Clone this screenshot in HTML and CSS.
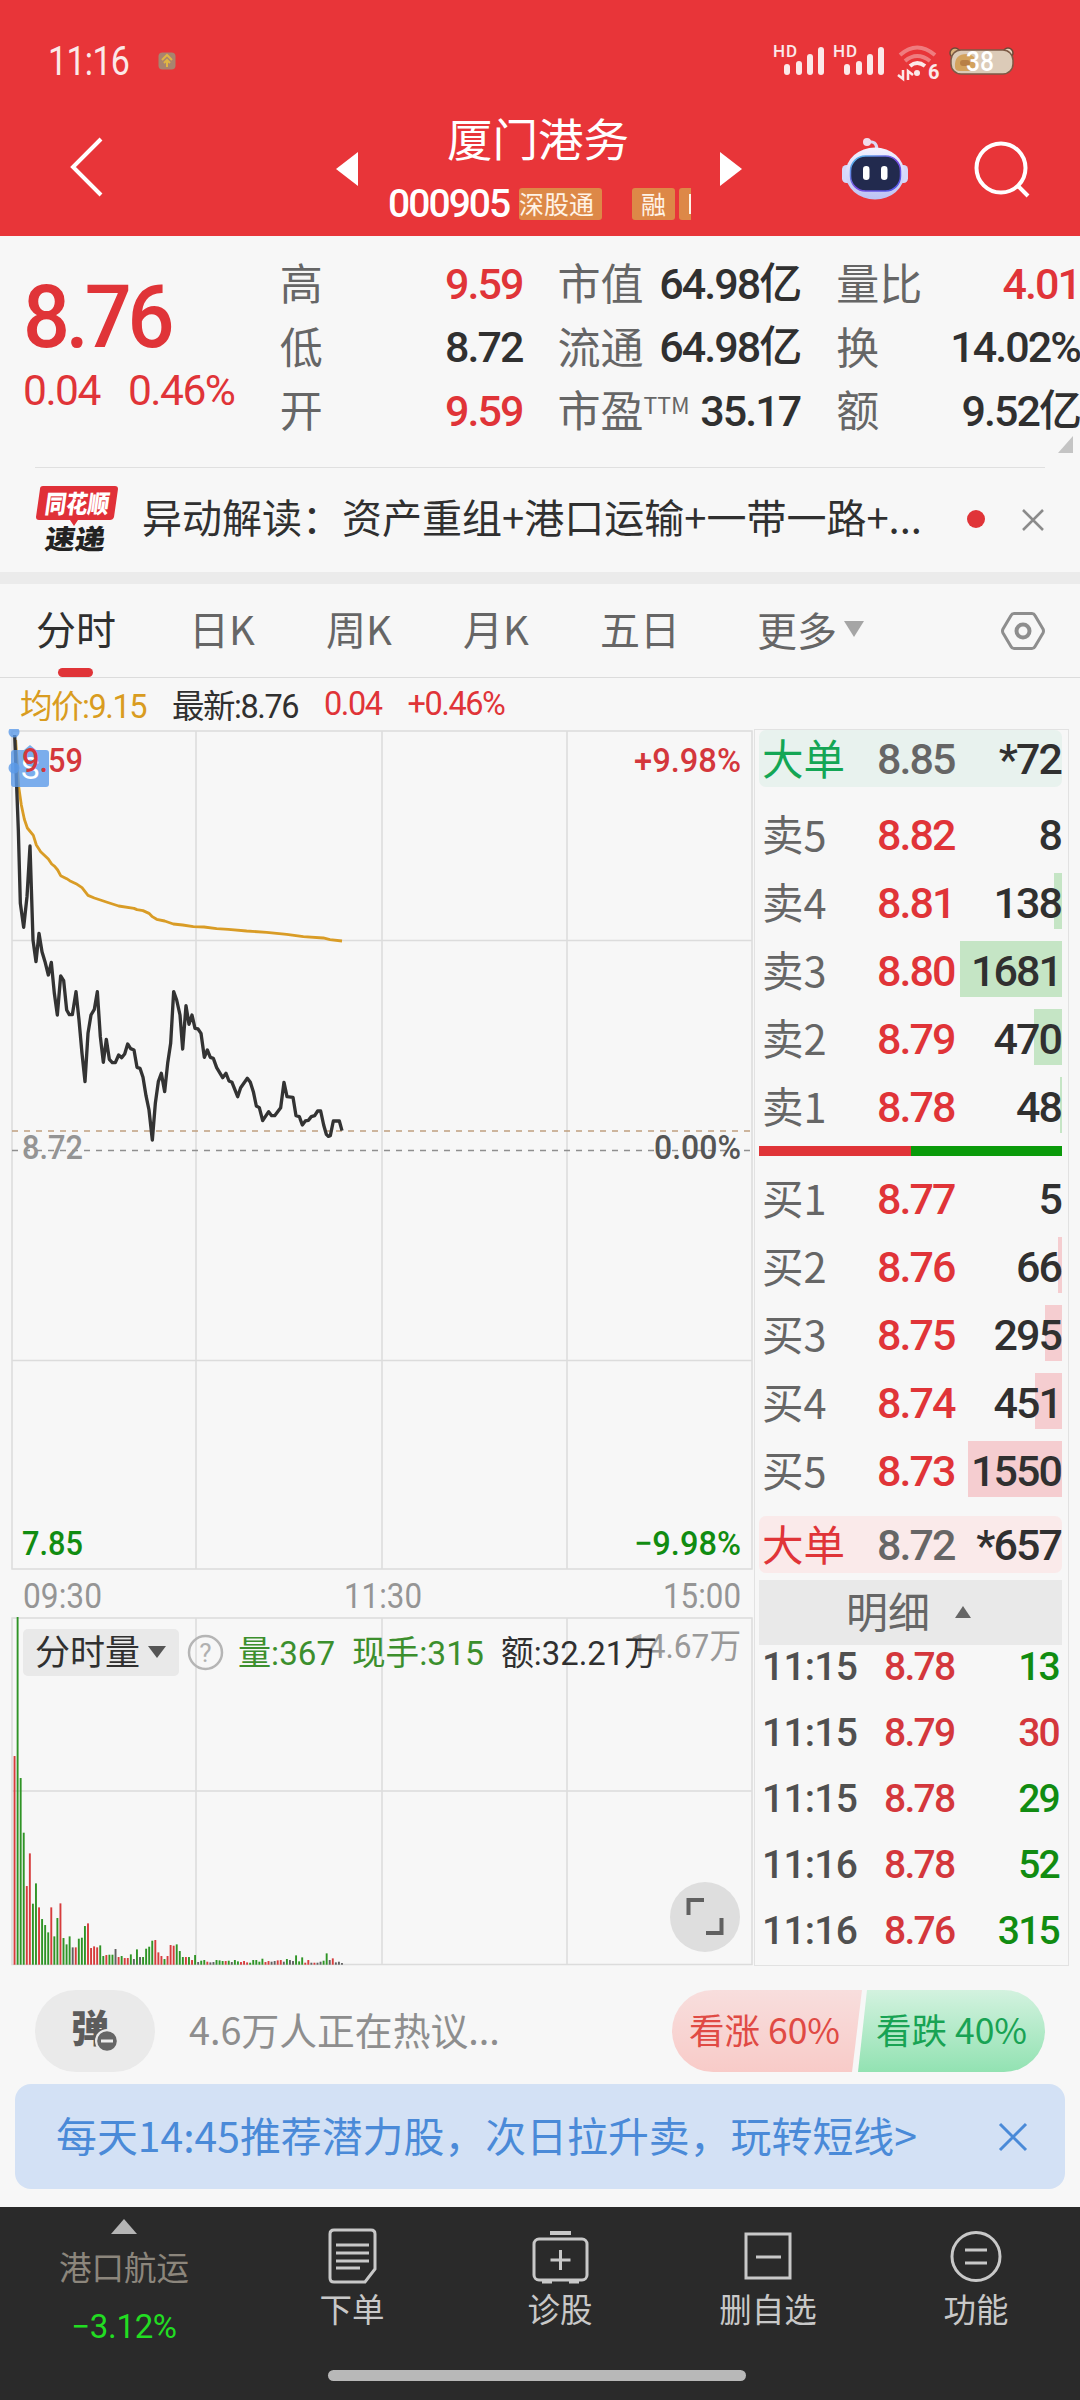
FILE: index.html
```html
<!DOCTYPE html>
<html lang="zh-CN">
<head>
<meta charset="utf-8">
<title>厦门港务 000905</title>
<link rel="stylesheet" href="styles.css">
</head>
<body>
<div class="app">
  <header class="header">
    <div class="status">
      <span class="status-time num">11:16</span>
      <svg class="status-dot" width="18" height="18" viewBox="0 0 18 18"><rect x=".5" y=".5" width="17" height="17" rx="4" fill="#a8846f"/><path d="M9 15V8M4 8l5-5 5 5M6 11l3-3 3 3" fill="none" stroke="#e0b544" stroke-width="2"/></svg>
      <svg class="status-icons" width="246" height="42" viewBox="0 0 246 42">
        <g fill="#fbe9e9">
          <text x="0" y="17" class="hd" textLength="24">HD</text>
          <rect x="11" y="24" width="6" height="11" rx="3"/><rect x="23" y="21" width="6" height="14" rx="3"/><rect x="34" y="14" width="6" height="21" rx="3"/><rect x="45" y="7" width="6" height="28" rx="3"/>
          <text x="60" y="17" class="hd" textLength="24">HD</text>
          <rect x="71" y="24" width="6" height="11" rx="3"/><rect x="83" y="21" width="6" height="14" rx="3"/><rect x="94" y="14" width="6" height="21" rx="3"/><rect x="105" y="7" width="6" height="28" rx="3"/>
          <circle cx="144" cy="33" r="3"/>
          <text x="155" y="39" class="hd six">6</text>
        </g>
        <g fill="none" stroke="#fbe9e9" stroke-width="4">
          <path d="M127 15q17-15 35 0M132 21q12-10 25 0" opacity=".4"/>
          <path d="M137 26q7-6 15 0"/>
          <path d="M130 30v9l-5-4M135 40v-9l5 4" stroke-width="2.5"/>
        </g>
        <g>
          <circle cx="182" cy="13" r="5" fill="#d8b27c" stroke="#6c4a38" stroke-width="1.5"/><circle cx="235" cy="13" r="5" fill="#e8d4c0" stroke="#6c4a38" stroke-width="1.5"/>
          <rect x="178" y="10" width="62" height="24" rx="10" fill="#dccbb8" stroke="#7b5a45" stroke-width="1.5"/>
          <path d="M182 27q-1-13 12-13 9 1 9 9 0 8-8 8h-8q-5 0-5-4z" fill="#d3a25d"/>
          <rect x="187" y="20" width="10" height="6" rx="3" fill="#b88046"/>
          <text x="193" y="31" class="batt" textLength="28" lengthAdjust="spacingAndGlyphs">38</text>
        </g>
      </svg>
    </div>
    <nav class="nav">
      <svg class="back" width="36" height="62" viewBox="0 0 36 62"><path d="M32 3L4 31l28 28" fill="none" stroke="#fff" stroke-width="4"/></svg>
      <svg class="prev" width="22" height="34" viewBox="0 0 22 34"><path d="M22 0v34L0 17z" fill="#fff"/></svg>
      <div class="stock">
        <h1 class="stock-name">厦门港务</h1>
        <div class="stock-code"><span class="num code">000905</span><span class="tag">深股通</span><span class="tag tag-gap">融</span><span class="tag tag-cut"></span></div>
      </div>
      <svg class="next" width="22" height="34" viewBox="0 0 22 34"><path d="M0 0v34l22-17z" fill="#fff"/></svg>
      <svg class="robot" width="68" height="64" viewBox="0 0 68 64">
        <defs>
          <linearGradient id="shell" x1="0" y1="0" x2="0" y2="1"><stop offset="0" stop-color="#f4f2ff"/><stop offset="1" stop-color="#bcc2f4"/></linearGradient>
          <linearGradient id="rim" x1="0" y1="0" x2="1" y2="1"><stop offset="0" stop-color="#4fc8ee"/><stop offset=".5" stop-color="#7a4ae0"/><stop offset="1" stop-color="#4a5be8"/></linearGradient>
        </defs>
        <path d="M26 6q10-2 10 8" fill="none" stroke="#dcd8f4" stroke-width="3"/><circle cx="26" cy="6" r="4" fill="#f2dcec"/>
        <rect x="1" y="29" width="10" height="18" rx="4.500" fill="#d5d8fa"/><rect x="57" y="29" width="10" height="18" rx="4.500" fill="#d5d8fa"/>
        <ellipse cx="34" cy="37.500" rx="29.500" ry="26" fill="url(#shell)"/>
        <rect x="9.500" y="20" width="50" height="35" rx="15" fill="#222a4e" stroke="url(#rim)" stroke-width="1.500"/>
        <rect x="22" y="30" width="6.500" height="14" rx="3.200" fill="#fff"/><rect x="40" y="30" width="6.500" height="14" rx="3.200" fill="#fff"/>
      </svg>
      <svg class="search" width="58" height="58" viewBox="0 0 58 58"><g fill="none" stroke="#fff" stroke-width="4"><circle cx="28" cy="28" r="24.500"/><path d="M44 45l11 11"/></g></svg>
    </nav>
  </header>

  <section class="quote">
    <div class="price">
      <div class="price-now num">8.76</div>
      <div class="price-diff num"><span>0.04</span><span>0.46%</span></div>
    </div>
    <dl class="stats stats-a">
      <div><dt>高</dt><dd class="num red">9.59</dd></div>
      <div><dt>低</dt><dd class="num">8.72</dd></div>
      <div><dt>开</dt><dd class="num red">9.59</dd></div>
    </dl>
    <dl class="stats stats-b">
      <div><dt>市值</dt><dd class="num">64.98亿</dd></div>
      <div><dt>流通</dt><dd class="num">64.98亿</dd></div>
      <div><dt>市盈<sup>TTM</sup></dt><dd class="num">35.17</dd></div>
    </dl>
    <dl class="stats stats-c">
      <div><dt>量比</dt><dd class="num red">4.01</dd></div>
      <div><dt>换</dt><dd class="num">14.02%</dd></div>
      <div><dt>额</dt><dd class="num">9.52亿</dd></div>
    </dl>
    <svg class="corner" width="15" height="17" viewBox="0 0 15 17"><path d="M15 0v17H0z" fill="#c4c4c4"/></svg>
  </section>

  <section class="news">
    <svg class="news-logo" width="84" height="68" viewBox="0 0 84 68">
      <path d="M8 1h72q3 0 3 3l-4 28q-1 3-4 3H43l-4 6-4-6H4q-3 0-3-3L5 4q0-3 3-3z" fill="#e03038"/>
      <text class="logo-a" transform="translate(9 28) skewX(-8)" textLength="64" lengthAdjust="spacingAndGlyphs">同花顺</text>
      <text class="logo-b" transform="translate(9 64) skewX(-8)" textLength="60" lengthAdjust="spacingAndGlyphs">速递</text>
    </svg>
    <span class="news-text">异动解读：资产重组+港口运输+一带一路+...</span>
    <i class="news-dot"></i>
    <svg class="news-close" width="24" height="24" viewBox="0 0 24 24"><path d="M2 2l20 20M22 2L2 22" stroke="#8b8b8b" stroke-width="2.500"/></svg>
  </section>

  <nav class="tabs">
    <span class="tab active">分时</span><span class="tab">日K</span><span class="tab">周K</span><span class="tab">月K</span><span class="tab">五日</span>
    <span class="tab more">更多<svg width="20" height="16" viewBox="0 0 20 16"><path d="M0 0h20L10 16z" fill="#a5a5a5"/></svg></span>
    <svg class="settings" width="46" height="40" viewBox="0 0 46 40"><g fill="none" stroke="#8e8e8e" stroke-width="3"><path d="M14 2.500h18q2 0 3 2l8 13.500q1 2 0 4l-8 13.500q-1 2-3 2H14q-2 0-3-2L3 22q-1-2 0-4l8-13.500q1-2 3-2z"/><circle cx="23" cy="20" r="6.500" stroke-width="4"/></g></svg>
  </nav>

  <main class="board">
    <div class="charts">
      <div class="legend num"><span class="gold">均价:9.15</span><span>最新:8.76</span><span class="red">0.04</span><span class="red">+0.46%</span></div>
      <svg class="chart" width="754" height="1239" viewBox="0 729 754 1239">
        <g fill="none" stroke="#dcdcdc" stroke-width="1.500">
          <path d="M12 731H752V1569H12zM196 731v838M382 731v838M567 731v838M12 940.500h740M12 1360.500h740"/>
          <path d="M12 1618H752V1964.500H12zM196 1618v346M382 1618v346M567 1618v346M12 1791h740"/>
        </g>
        <path d="M12 1131H752" stroke="#c0a080" stroke-width="1.700" stroke-dasharray="6 6"/>
        <path d="M12 1150.500H752" stroke="#8f8f8f" stroke-width="1.700" stroke-dasharray="6 6"/>
        <g transform="translate(0 720) scale(.33333)" fill="none" stroke-linejoin="round" stroke-width="10">
          <path stroke="#d99c26" stroke-width="8.500" d="M47 60L56 200 64 255 73 298 82 324 100 346 109 375 122 395 145 417 155 432 164 439 173 450 182 467 200 476 209 482 228 491 246 503 264 526 283 534 319 546 356 558 402 565 411 569 429 572 447 580 457 590 470 598 494 603 520 612 548 615 580 620 612 621 650 626 685 628 740 633 800 637 860 643 910 650 970 654 990 659 1026 663"/>
          <path stroke="#333" d="M44 45L50 200 55 330 61 550 71 622 81 530 90 378 99 660 108 725 117 640 126 695 135 725 145 765 154 727 163 820 172 885 182 768 191 782 200 870 208 884 217 884 228 815 237 900 246 1000 255 1085 264 940 273 885 283 868 292 815 301 950 310 1027 319 958 328 1018 337 1028 346 1028 356 1005 365 1013 374 1002 383 972 392 986 402 990 411 1042 420 1045 429 1072 438 1127 447 1170 457 1260 466 1150 475 1085 484 1060 494 1115 503 1030 512 970 521 815 530 840 540 885 548 987 558 857 567 913 576 885 585 925 594 927 603 940 613 1012 622 990 631 1012 640 1015 650 1043 668 1073 678 1060 687 1083 696 1087 713 1130 722 1103 742 1075 751 1087 760 1115 769 1158 778 1163 788 1202 806 1175 815 1187 824 1187 842 1163 852 1087 861 1130 879 1132 888 1187 898 1190 907 1215 916 1203 925 1201 934 1190 944 1187 953 1173 962 1173 971 1215 979 1243 985 1249 991 1247 1000 1203 1018 1203 1026 1232"/>
        </g>
        <g fill="#5b9ae8" fill-opacity=".8">
          <path d="M14 750h10l6-5 6 5h10q3 0 3 3v31q0 3-3 3H14q-3 0-3-3v-31q0-3 3-3z"/>
          <circle cx="14" cy="732" r="5.500"/><circle cx="14" cy="768" r="5.500"/>
        </g>
        <text x="21" y="779" class="flag">S</text>
        <g class="axis">
          <text x="22" y="772" fill="#d4373c" textLength="61" lengthAdjust="spacingAndGlyphs">9.59</text>
          <text x="634" y="772" fill="#d4373c" textLength="107" lengthAdjust="spacingAndGlyphs">+9.98%</text>
          <text x="22" y="1159" fill="#949494" textLength="61" lengthAdjust="spacingAndGlyphs">8.72</text>
          <text x="654" y="1159" fill="#555" textLength="87" lengthAdjust="spacingAndGlyphs">0.00%</text>
          <text x="22" y="1555" fill="#118c11" textLength="61" lengthAdjust="spacingAndGlyphs">7.85</text>
          <text x="634" y="1555" fill="#118c11" textLength="107" lengthAdjust="spacingAndGlyphs">−9.98%</text>
          <g fill="#959595" class="time">
            <text x="23" y="1608" textLength="79" lengthAdjust="spacingAndGlyphs">09:30</text>
            <text x="344" y="1608" textLength="78" lengthAdjust="spacingAndGlyphs">11:30</text>
            <text x="663" y="1608" textLength="78" lengthAdjust="spacingAndGlyphs">15:00</text>
          </g>
        </g>
        <g id="volume"></g>
        <rect x="23" y="1629" width="156" height="47" rx="5" fill="#e7e7e7" fill-opacity=".9"/>
        <text x="35" y="1665" class="sel" textLength="105">分时量</text>
        <path d="M148 1646h18l-9 12z" fill="#555"/>
        <circle cx="205.500" cy="1652.500" r="16.500" fill="none" stroke="#b5b5b5" stroke-width="2.500"/>
        <text x="205.500" y="1662" text-anchor="middle" class="help">?</text>
        <g class="vol">
          <text x="630" y="1658" fill="#999" textLength="111" lengthAdjust="spacingAndGlyphs">14.67万</text>
          <text x="238" y="1665" fill="#3c8f2d" textLength="97" lengthAdjust="spacingAndGlyphs">量:367</text>
          <text x="352" y="1665" fill="#3c8f2d" textLength="132" lengthAdjust="spacingAndGlyphs">现手:315</text>
          <text x="501" y="1665" fill="#303030" textLength="156" lengthAdjust="spacingAndGlyphs">额:32.21万</text>
        </g>
        <circle cx="705" cy="1917" r="35" fill="#dedede"/>
        <path d="M688.500 1915v-15H704M721.500 1918v15H706" fill="none" stroke="#606060" stroke-width="4"/>
      </svg>
    </div>

    <aside class="book">
      <div class="big sell"><b>大单</b><span class="num">8.85</span><em class="num">*72</em></div>
      <div class="levels asks">
        <div class="level"><b>卖5</b><span class="num">8.82</span><em class="num">8</em></div>
        <div class="level"><b>卖4</b><span class="num">8.81</span><em class="num">138</em><i style="width:8px"></i></div>
        <div class="level"><b>卖3</b><span class="num">8.80</span><em class="num">1681</em><i style="width:102px"></i></div>
        <div class="level"><b>卖2</b><span class="num">8.79</span><em class="num">470</em><i style="width:28px"></i></div>
        <div class="level"><b>卖1</b><span class="num">8.78</span><em class="num">48</em><i style="width:2px"></i></div>
      </div>
      <div class="ratio"><i></i></div>
      <div class="levels bids">
        <div class="level"><b>买1</b><span class="num">8.77</span><em class="num">5</em></div>
        <div class="level"><b>买2</b><span class="num">8.76</span><em class="num">66</em><i style="width:4px"></i></div>
        <div class="level"><b>买3</b><span class="num">8.75</span><em class="num">295</em><i style="width:17px"></i></div>
        <div class="level"><b>买4</b><span class="num">8.74</span><em class="num">451</em><i style="width:27px"></i></div>
        <div class="level"><b>买5</b><span class="num">8.73</span><em class="num">1550</em><i style="width:94px"></i></div>
      </div>
      <div class="big buy"><b>大单</b><span class="num">8.72</span><em class="num">*657</em></div>
      <div class="detail"><span>明细</span><svg width="16" height="12" viewBox="0 0 16 12"><path d="M8 0l8 12H0z" fill="#666"/></svg></div>
      <div class="ticks num">
        <div><b>11:15</b><span>8.78</span><em>13</em></div>
        <div><b>11:15</b><span>8.79</span><em class="red">30</em></div>
        <div><b>11:15</b><span>8.78</span><em>29</em></div>
        <div><b>11:16</b><span>8.78</span><em>52</em></div>
        <div><b>11:16</b><span>8.76</span><em>315</em></div>
      </div>
    </aside>
  </main>

  <section class="talk">
    <div class="bullet"><svg width="48" height="46" viewBox="0 0 48 46"><text x="0" y="34" class="bullet-text">弹</text><circle cx="36" cy="33" r="12" fill="#eaeaea"/><circle cx="36" cy="33" r="9.800" fill="#666"/><path d="M30 33h12" stroke="#eee" stroke-width="3"/></svg></div>
    <span class="talk-text">4.6万人正在热议...</span>
    <div class="vote"><span class="up">看涨 60%</span><span class="down">看跌 40%</span></div>
  </section>

  <section class="banner">
    <span>每天14:45推荐潜力股，次日拉升卖，玩转短线&gt;</span>
    <svg width="30" height="30" viewBox="0 0 30 30"><path d="M2 2l26 26M28 2L2 28" stroke="#4a8ad8" stroke-width="3"/></svg>
  </section>

  <footer class="footer">
    <div class="sector"><svg width="26" height="15" viewBox="0 0 26 15"><path d="M13 0l13 15H0z" fill="#b5b5b5"/></svg><span class="sector-name">港口航运</span><span class="sector-change">−3.12%</span></div>
    <div class="item"><svg width="60" height="58" viewBox="0 0 60 58"><g fill="none" stroke="#c8c8c8" stroke-width="3"><path d="M12 3h37q4 0 4 4v35L43 55H12q-4 0-4-4V7q0-4 4-4z"/><path d="M14 18h33M14 26h33M14 34h33M14 41h24" /></g></svg>下单</div>
    <div class="item"><svg width="60" height="58" viewBox="0 0 60 58"><g fill="none" stroke="#c8c8c8" stroke-width="3"><rect x="4" y="12" width="53" height="41" rx="5"/><path d="M20 6h21" stroke-width="4"/><path d="M12 55h10M39 55h10M30.500 23v20M20.500 33h20"/></g></svg>诊股</div>
    <div class="item"><svg width="60" height="58" viewBox="0 0 60 58"><g fill="none" stroke="#c8c8c8" stroke-width="3"><rect x="8" y="7" width="44" height="44"/><path d="M18 30h25"/></g></svg>删自选</div>
    <div class="item"><svg width="60" height="58" viewBox="0 0 60 58"><g fill="none" stroke="#c8c8c8" stroke-width="3"><circle cx="30" cy="29.500" r="24"/><path d="M19 23h22M19 36h22"/></g></svg>功能</div>
    <div class="home-bar"></div>
  </footer>
</div>
<script src="volume.js"></script>
</body>
</html>
```
FILE: volume.js
```js
// Each entry: bar colour (r up, g down, k flat) and its height in thirds of a pixel.
const bars = ("r626 g1043 g560 g396 r236 r334 g183 g244 r172 g137 g119 g97 r172 g85 g140 r184 g80 g61 g85 k52 r52 " +
  "g78 g81 g116 r124 r50 r55 r52 g58 g26 r29 g30 g30 k47 r23 g26 r20 r20 g31 k17 g46 k23 g23 g48 g54 g72 r74 r37 r26 " +
  "g17 r26 r59 r57 g61 g41 g23 r23 g23 r14 g29 k8 g12 g14 r9 k7 k8 g14 g13 g11 r11 g12 k8 g14 g10 r8 r11 r7 g6 g14 " +
  "g14 g9 g18 r8 r11 k9 k11 r13 r14 k9 g17 k14 k11 g28 g10 g22 r6 r14 k6 r6 k6 k9 g12 g34 k14 r19 k7 k9 k5").split(" ");
const colors = { r: "#d63c3c", g: "#2f9426", k: "#606060" };
const layer = document.getElementById("volume");
bars.forEach((bar, i) => {
  const h = Number(bar.slice(1)) / 3;
  const rect = document.createElementNS("http://www.w3.org/2000/svg", "rect");
  rect.setAttribute("x", (13.6 + i * 3.06).toFixed(2));
  rect.setAttribute("y", (1964.7 - h).toFixed(2));
  rect.setAttribute("width", "1.9");
  rect.setAttribute("height", h.toFixed(2));
  rect.setAttribute("fill", colors[bar[0]]);
  layer.appendChild(rect);
});
```
FILE: styles.css
```css
* { box-sizing: border-box; margin: 0; padding: 0; }
body { width: 1080px; background: #f7f7f7; color: #303030; font-family: "Noto Sans CJK SC", sans-serif; white-space: nowrap; }
b, em, i { font-weight: inherit; font-style: normal; }
svg { flex: none; display: block; }
.app { width: 1080px; height: 2400px; display: flex; flex-direction: column; overflow: hidden; }
.num { font-family: Roboto, "Noto Sans CJK SC", sans-serif; font-weight: 500; letter-spacing: -.045em; }
.red { color: #e03438; }
.gold { color: #d99c20; }

.header { height: 236px; background: #e83539; color: #fff; flex: none; }
.status { height: 116px; padding: 6px 61px 0 48px; display: flex; align-items: center; color: #fbe9e9; }
.status-time { font-size: 40px; width: 110px; letter-spacing: -.02em; flex: none; margin-top: 1px; transform: scaleX(.85); transform-origin: left; font-weight: 400; }
.status-icons { margin-left: auto; margin-top: -1px; }
.hd { font: 500 17px Roboto, sans-serif; }
.six { font-size: 20px; font-weight: 700; }
.batt { font: 500 27px Roboto, sans-serif; fill: #fff; }
.nav { height: 120px; display: flex; align-items: center; padding-bottom: 18px; }
.back { margin-left: 69px; }
.prev { margin-left: 231px; margin-top: 4px; }
.stock { width: 304px; margin-left: 30px; height: 120px; align-self: flex-start; display: flex; flex-direction: column; align-items: center; gap: 28px; }
.stock-name { font-size: 45.500px; font-weight: 400; line-height: 46px; height: 46px; margin-top: -2px; position: relative; left: -2px; }
.stock-code { width: 304px; display: flex; align-items: center; height: 32px; }
.code { font-size: 39px; width: 131px; letter-spacing: -.05em; line-height: 32px; }
.tag { height: 32px; line-height: 30px; font-size: 25px; background: #dd8847; border-radius: 3px; width: 83px; color: #fff3e6; }
.tag-gap { margin-left: 30px; width: 43px; text-align: center; }
.tag-cut { margin-left: 4px; width: 12px; border-radius: 3px 0 0 3px; display: flex; align-items: center; justify-content: flex-end; }
.tag-cut::after { content: ""; width: 2px; height: 20px; background: #fff3e6; }
.next { margin-left: 28px; margin-top: 4px; }
.robot { margin-left: 99px; margin-top: 2px; }
.search { margin-left: 64px; margin-top: 4px; }

.quote { height: 231px; display: flex; position: relative; flex: none; }
.price { width: 281px; padding: 39px 0 0 23px; color: #e03438; }
.price-now { font-size: 87px; line-height: 84px; letter-spacing: -.05em; transform: scaleX(.95); transform-origin: left; }
.price-diff { font-size: 42.500px; line-height: 63px; display: flex; gap: 28px; font-weight: 400; letter-spacing: -.035em; }
.stats { padding-top: 16px; }
.stats div { height: 63.500px; display: flex; align-items: center; justify-content: space-between; }
.stats dt { font-size: 43px; line-height: 56px; color: #666; margin-top: -5px; }
.stats dd { font-size: 43px; line-height: 56px; }
.stats sup { font-size: 23px; line-height: 0; vertical-align: 13px; }
.stats-a { width: 243px; margin-left: -1px; }
.stats-b { width: 243px; margin-left: 35px; }
.stats-c { width: 244px; margin-left: 36px; }
.corner { position: absolute; right: 7px; bottom: 14px; }

.news { height: 105px; margin: 0 35px; border-top: 1px solid #e0e0e0; display: flex; align-items: center; flex: none; }
.news-logo { margin-top: -3px; }
.logo-a { font: 900 25px "Noto Sans CJK SC", sans-serif; fill: #fff; }
.logo-b { font: 900 27px "Noto Sans CJK SC", sans-serif; fill: #222; }
.news-text { font-size: 40px; line-height: 50px; margin: -8px 0 0 23px; width: 829px; }
.news-dot { width: 18px; height: 18px; border-radius: 50%; background: #e03438; margin-top: -2px; }
.news-close { margin-left: 36px; }

.tabs { height: 106px; border-top: 12px solid #ebebeb; border-bottom: 1px solid #dcdcdc; display: flex; align-items: center; flex: none; font-size: 40px; color: #666; padding-left: 36px; }
.tab { width: 137px; height: 93px; line-height: 88px; }
.tab:first-child { width: 153px; }
.tab:nth-child(5) { width: 157px; }
.more { display: flex; align-items: center; gap: 7px; width: 243px; padding-bottom: 4px; }
.active { color: #303030; position: relative; }
.active::after { content: ""; position: absolute; left: 22px; bottom: 0; width: 35px; height: 9px; border-radius: 5px; background: #e03438; }

.board { height: 1290px; display: flex; flex: none; }
.charts { width: 754px; }
.legend { height: 51px; padding-left: 20px; display: flex; align-items: center; font-size: 32.500px; gap: 26px; font-weight: 400; }
.axis { font: 500 34px Roboto, sans-serif; }
.time { font-weight: 400; font-size: 35px; }
.flag { font: 400 31px Roboto, sans-serif; fill: #fff; }
.sel { font: 400 35px "Noto Sans CJK SC", sans-serif; fill: #303030; }
.help { font: 400 26px Roboto, sans-serif; fill: #b0b0b0; }
.vol { font: 400 34px Roboto, "Noto Sans CJK SC", sans-serif; }

.book { width: 315px; margin-top: 51px; height: 1237px; border: 1px solid #e2e2e2; padding: 0 6px 0 4px; }
.big, .level { height: 57px; display: flex; align-items: center; position: relative; padding-left: 3px; font-size: 41.500px; line-height: 56px; }
.big { border-radius: 7px; }
.big b, .level b { width: 115px; margin-top: -4px; color: #666; }
.level b { margin-top: -1px; }
.big span, .level span { font-size: 43px; color: #e03438; }
.big em, .level em { font-size: 43px; margin-left: auto; color: #303030; z-index: 1; padding-right: 1px; }
.level span, .level em { padding-top: 3px; }
.sell { background: #e8f2ee; }
.sell b { color: #14a655; }
.buy { background: #faeaea; margin-top: 19px; }
.buy b { color: #e03438; }
.big span { color: #666; }
.levels { display: flex; flex-direction: column; gap: 12px; }
.levels .level { height: 56px; }
.level i { position: absolute; right: 0; top: 0; height: 56px; background: #c5e5c5; }
.bids .level i { background: #f5cdd0; }
.asks { margin-top: 18px; }
.ratio { height: 10px; background: #0a9a0a; margin: 13px 0; }
.ratio i { display: block; width: 152px; height: 10px; background: #e03438; }
.detail { height: 65px; background: #e9e9e9; margin-top: 7px; display: flex; align-items: center; padding-left: 87px; gap: 25px; font-size: 42px; line-height: 60px; color: #666; }
.detail span { margin-top: -6px; }
.detail svg { margin-top: -2px; }
.ticks { padding: 0 3px 0 3px; margin-top: -11px; font-size: 39px; }
.ticks div { height: 66px; display: flex; align-items: center; }
.ticks b { width: 122px; color: #505050; letter-spacing: -.02em; }
.ticks span { color: #d4373c; }
.ticks em { margin-left: auto; color: #118c11; }
.ticks em.red { color: #d4373c; }

.talk { height: 116px; display: flex; align-items: center; padding: 10px 35px 0; flex: none; }
.bullet { width: 120px; height: 82px; border-radius: 41px; background: #eaeaea; display: flex; align-items: center; justify-content: center; }
.bullet-text { font: 900 38px "Noto Sans CJK SC", sans-serif; fill: #5c5c5c; }
.talk-text { font-size: 37.800px; color: #8e8e8e; margin: -6px 0 0 34px; }
.vote { margin-left: auto; width: 373px; height: 82px; border-radius: 41px; overflow: hidden; display: flex; font-size: 35.500px; line-height: 78px; background: #f7f7f7; }
.up { width: 190px; padding-left: 17px; color: #e04a44; background: linear-gradient(#f8dedd, #f8cbc8); clip-path: polygon(0 0, 100% 0, 180px 100%, 0 100%); }
.down { width: 187px; margin-left: -4px; padding-left: 18px; color: #18a354; background: linear-gradient(#d3f2df, #92e2b2); clip-path: polygon(9px 0, 100% 0, 100% 100%, 0 100%); }

.banner { margin: 0 15px; height: 105px; border-radius: 16px; background: #d3e1f5; color: #4a8ad8; font-size: 40.900px; display: flex; align-items: center; justify-content: space-between; padding: 0 37px 0 41px; flex: none; }
.banner span { margin-top: -5px; }

.footer { margin-top: 18px; height: 193px; background: #2a2a2a; display: flex; position: relative; color: #c8c8c8; font-size: 32.500px; padding-left: 20px; }
.sector { width: 208px; display: flex; flex-direction: column; align-items: center; padding-top: 12px; }
.sector-name { color: #8c867c; font-size: 32.500px; line-height: 46px; margin-top: 9px; }
.sector-change { color: #22dd22; font: 400 33px/46px Roboto, sans-serif; margin-top: 15px; letter-spacing: -.01em; }
.item { width: 208px; position: relative; left: 20px; display: flex; flex-direction: column; align-items: center; padding-top: 20px; line-height: 46px; }
.home-bar { position: absolute; left: 328px; top: 163px; width: 418px; height: 11px; border-radius: 6px; background: #b8b8b8; }
```
